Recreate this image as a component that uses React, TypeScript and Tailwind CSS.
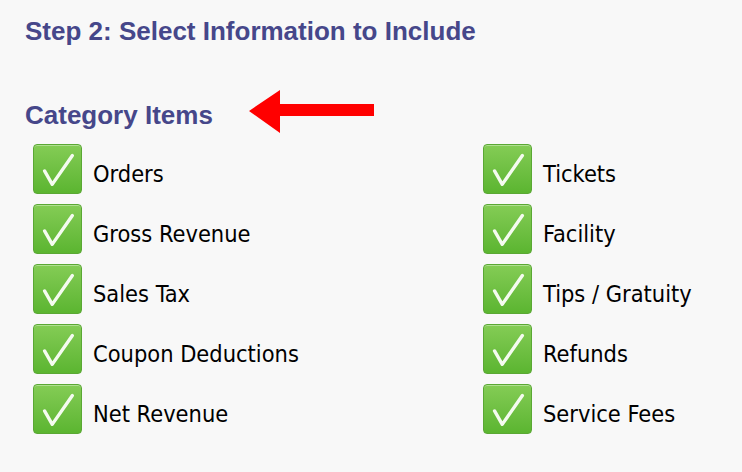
const left = ["Orders", "Gross Revenue", "Sales Tax", "Coupon Deductions", "Net Revenue"];
const right = ["Tickets", "Facility", "Tips / Gratuity", "Refunds", "Service Fees"];

function CheckBox() {
  return (
    <div className="w-[49px] h-[50px] shrink-0 rounded-[4px] border border-[#5aa834] bg-gradient-to-b from-[#84cc55] to-[#5bb530] shadow-[inset_0_1px_0_rgba(255,255,255,0.35)] flex items-center justify-center">
      <svg width="49" height="50" viewBox="0 0 49 50">
        <path
          d="M11 27 L19 41 L40 11"
          fill="none"
          stroke="#f4fbef"
          strokeWidth="3.5"
          strokeLinecap="round"
          strokeLinejoin="round"
        />
      </svg>
    </div>
  );
}

function Item({ label }: { label: string }) {
  return (
    <div className="flex items-center h-[50px] gap-[11px]">
      <CheckBox />
      <span className="text-[23.4px] pt-[12px] text-black font-['DejaVu_Sans_Condensed','DejaVu_Sans',sans-serif]">
        {label}
      </span>
    </div>
  );
}

export default function App() {
  return (
    <div className="w-[742px] h-[472px] bg-[#f8f8f8] pl-[25px] pt-[16px] font-['Liberation_Sans',Arial,sans-serif]">
      <h1 className="text-[26px] font-bold text-[#46478a] leading-[30px]">
        Step 2: Select Information to Include
      </h1>
      <div className="flex items-start mt-[54px] h-[30px]">
        <h2 className="text-[26px] font-bold text-[#46478a] leading-[30px]">Category Items</h2>
        <svg className="ml-[36px] mt-[-10px]" width="126" height="44" viewBox="0 0 126 44">
          <polygon points="0,21 31,0 31,14 125,14 125,26 31,26 31,43" fill="#f00" />
        </svg>
      </div>
      <div className="grid grid-cols-[450px_1fr] ml-[8px] mt-[14px] gap-y-[10px]">
        {left.map((l, i) => (
          <>
            <Item key={l} label={l} />
            <Item key={right[i]} label={right[i]} />
          </>
        ))}
      </div>
    </div>
  );
}
